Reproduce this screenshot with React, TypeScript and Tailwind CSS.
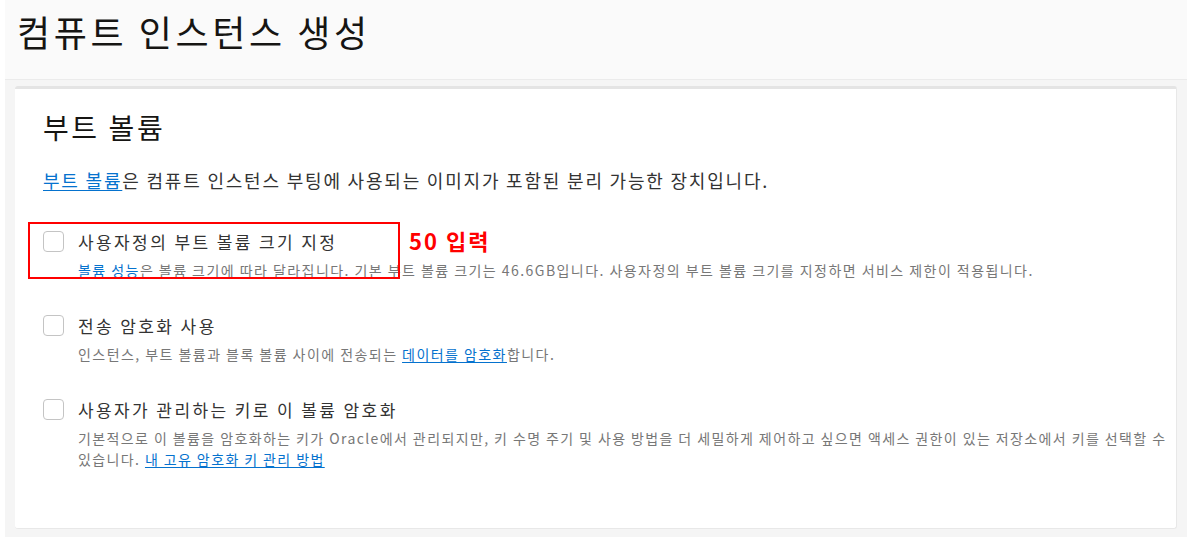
import React from "react";

const font = { fontFamily: '"Noto Sans CJK KR", "Noto Sans", sans-serif' };

function Checkbox() {
  return <div className="mt-[2px] h-[21px] w-[21px] shrink-0 rounded-[4px] border border-[#c4c4c4] bg-white" />;
}

export default function App() {
  return (
    <div className="relative h-[546px] w-[1197px] overflow-hidden bg-white text-[#333]" style={font}>
      <div className="ml-[5px] w-[1182px]">
        <div className="flex h-[80px] items-start border-b border-[#ebebeb] bg-[#fafafa] pl-[12px] pt-[13px]">
          <h1 className="text-[36px] font-normal leading-none tracking-[3.6px] text-[#161513]">컴퓨트 인스턴스 생성</h1>
        </div>
        <div className="bg-[#f5f5f5] px-[10px] pb-[8px] pt-[6px]">
          <div className="relative h-[443px] rounded-[3px] border-t-[3px] border-r border-b border-[#e4e4e4] border-r-[#e8e8e8] border-b-[#e8e8e8] bg-white pl-[28px] pr-0 pt-[18px]">
            <h2 className="text-[28px] font-normal leading-[40px] tracking-[2.6px] text-[#161513]">부트 볼륨</h2>
            <p className="mt-[19px] text-[18px] leading-[28px] tracking-[1.8px] text-[#333]">
              <a className="text-[#0572ce] underline underline-offset-2">부트 볼륨</a>은 컴퓨트 인스턴스 부팅에 사용되는 이미지가 포함된 분리 가능한 장치입니다.
            </p>

            <div className="mt-[35px] flex flex-col gap-[32px]">
              <div className="flex gap-[14px]">
                <Checkbox />
                <div>
                  <div className="mb-[5px] text-[17px] leading-[26px] tracking-[2.4px] text-[#333]">사용자정의 부트 볼륨 크기 지정</div>
                  <div className="text-[14px] leading-[21px] tracking-[1.45px] text-[#777]">
                    <a className="text-[#0572ce] underline underline-offset-2">볼륨 성능</a>은 볼륨 크기에 따라 달라집니다. 기본 부트 볼륨 크기는 46.6GB입니다. 사용자정의 부트 볼륨 크기를 지정하면 서비스 제한이 적용됩니다.
                  </div>
                </div>
              </div>
              <div className="flex gap-[14px]">
                <Checkbox />
                <div>
                  <div className="mb-[5px] text-[17px] leading-[26px] tracking-[2.4px] text-[#333]">전송 암호화 사용</div>
                  <div className="text-[14px] leading-[21px] tracking-[1.45px] text-[#777]">
                    인스턴스, 부트 볼륨과 블록 볼륨 사이에 전송되는 <a className="text-[#0572ce] underline underline-offset-2">데이터를 암호화</a>합니다.
                  </div>
                </div>
              </div>
              <div className="flex gap-[14px]">
                <Checkbox />
                <div>
                  <div className="mb-[5px] text-[17px] leading-[26px] tracking-[2.4px] text-[#333]">사용자가 관리하는 키로 이 볼륨 암호화</div>
                  <div className="text-[14px] leading-[21px] tracking-[1.4px] text-[#777]">
                    기본적으로 이 볼륨을 암호화하는 키가 Oracle에서 관리되지만, 키 수명 주기 및 사용 방법을 더 세밀하게 제어하고 싶으면 액세스 권한이 있는 저장소에서 키를 선택할 수 있습니다. <a className="text-[#0572ce] underline underline-offset-2">내 고유 암호화 키 관리 방법</a>
                  </div>
                </div>
              </div>
            </div>
          </div>
        </div>
      </div>
      <div className="pointer-events-none absolute left-[28px] top-[222px] h-[57px] w-[372px] border-2 border-[#ff0000]" />
      <div className="absolute left-[409px] top-[225px] text-[22px] font-bold leading-[30px] tracking-[2px] text-[#ff0000]">50 입력</div>
    </div>
  );
}
